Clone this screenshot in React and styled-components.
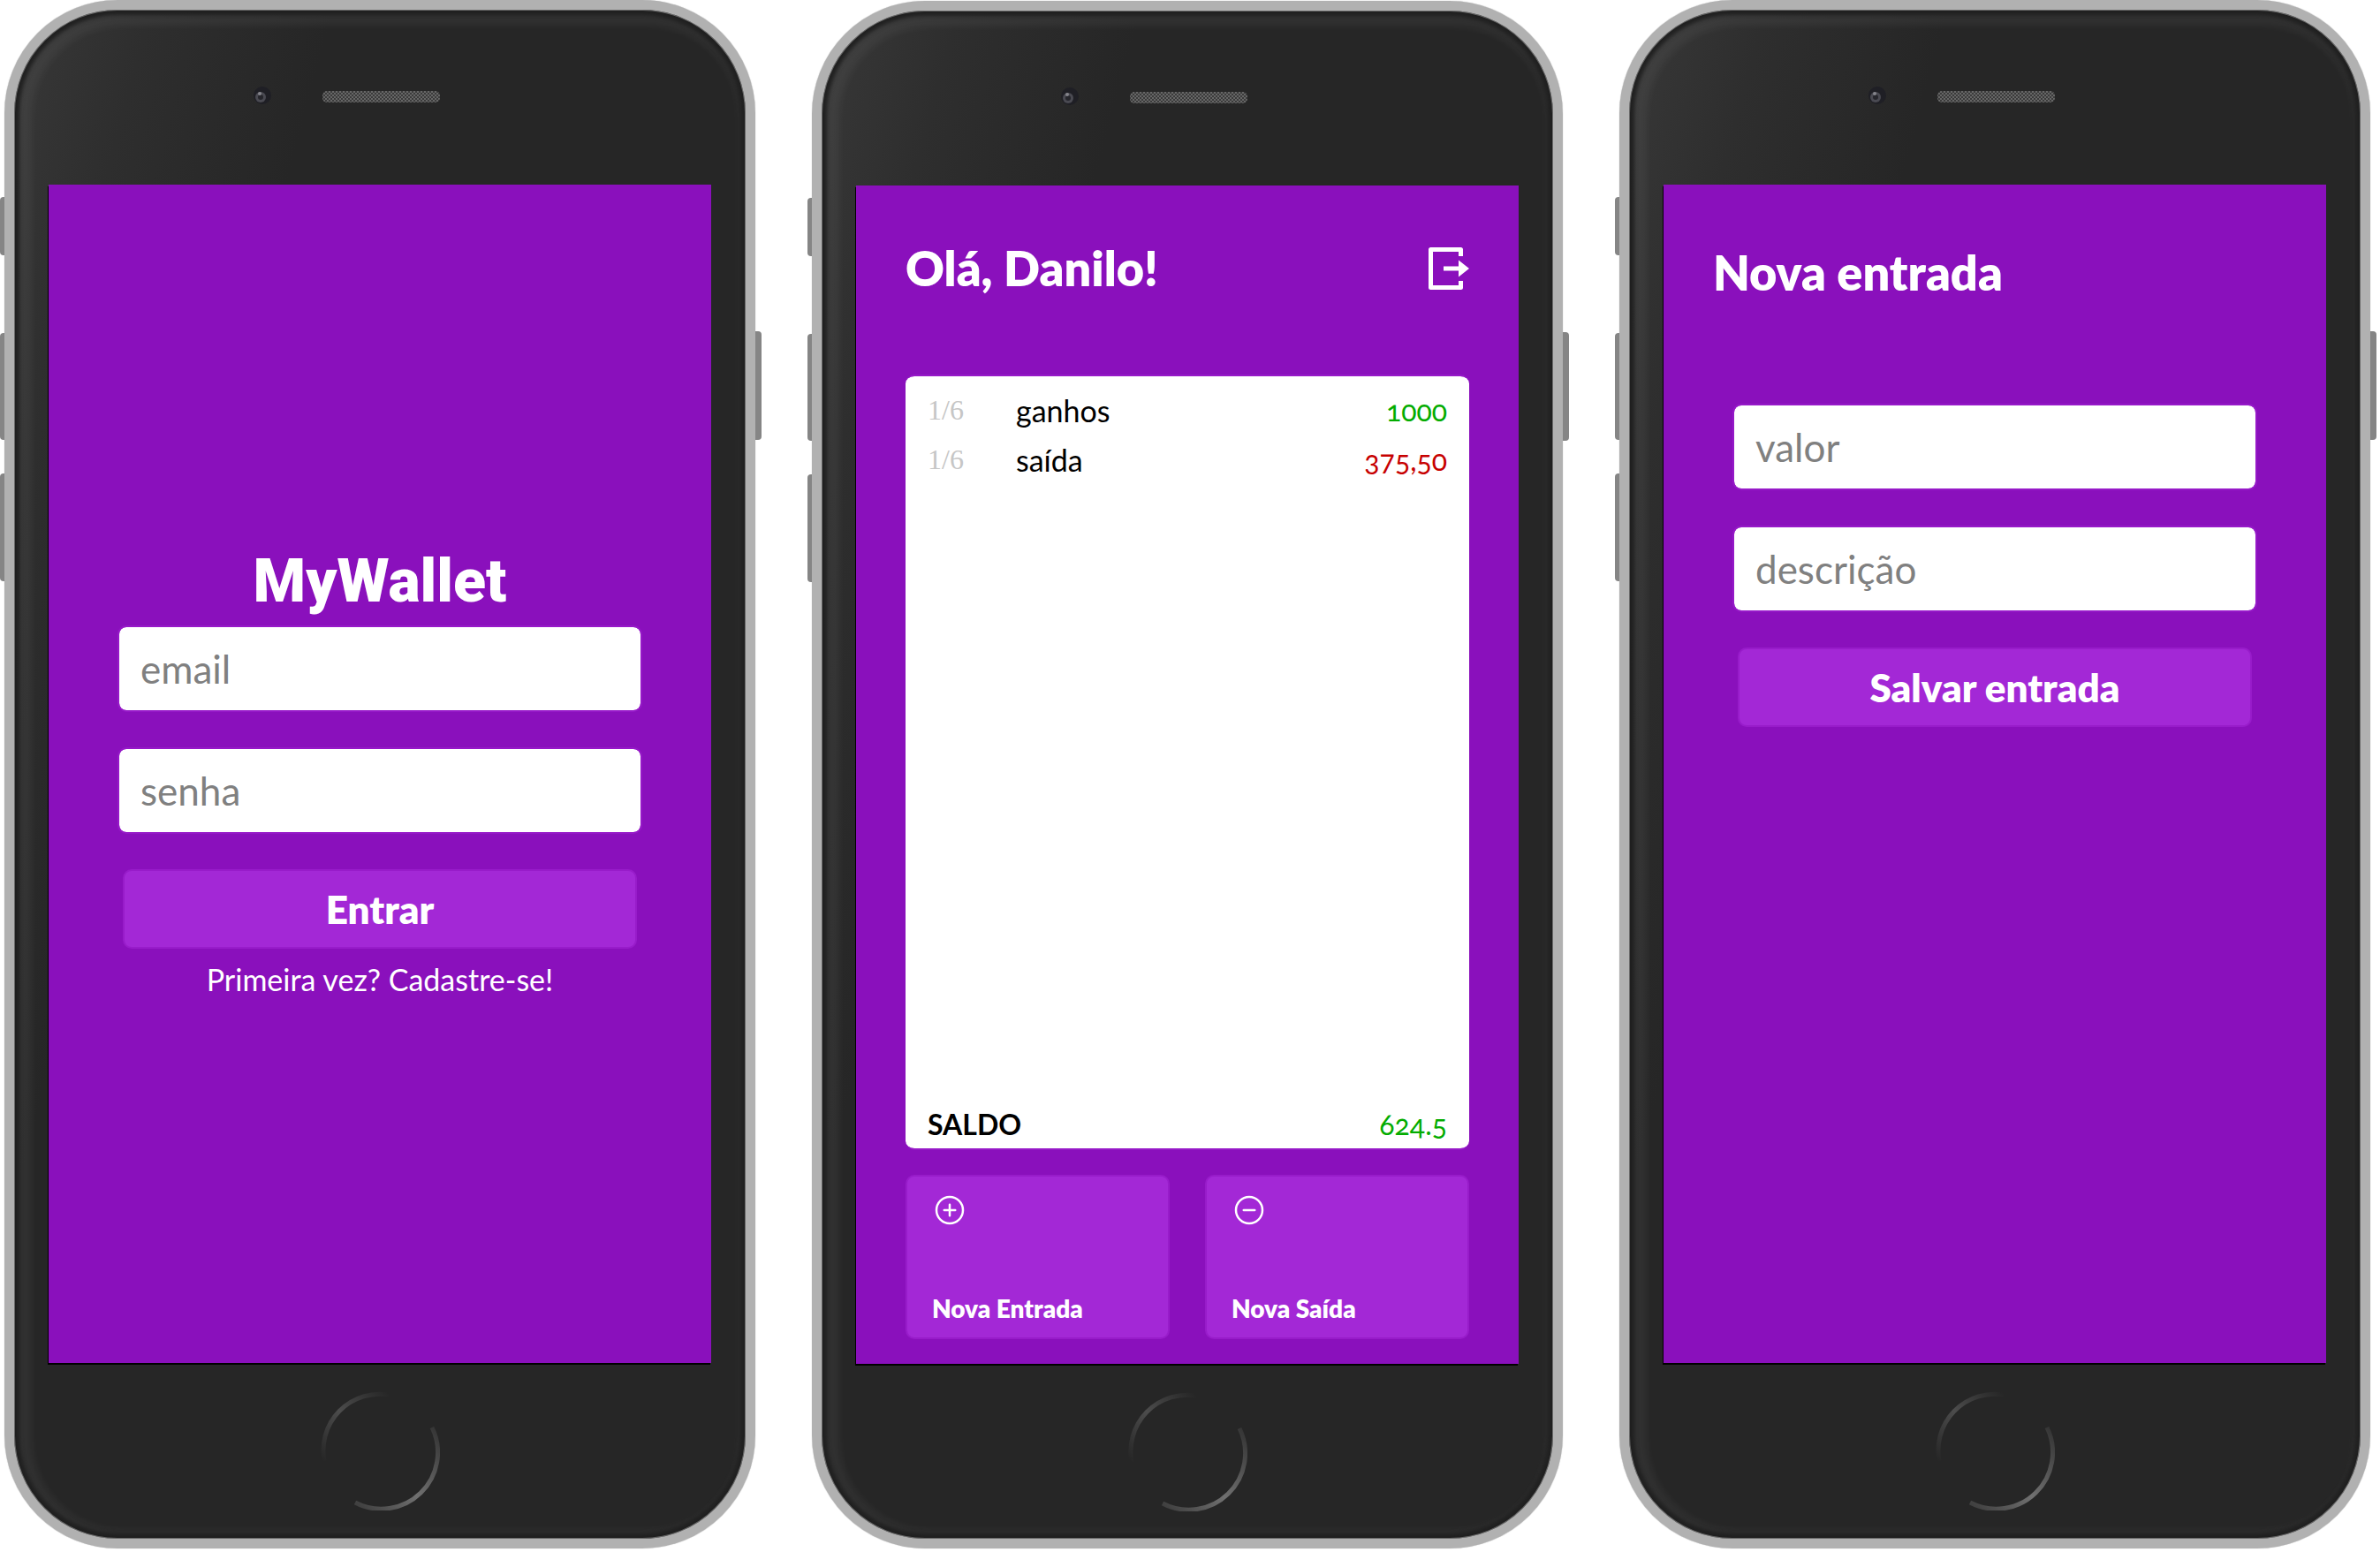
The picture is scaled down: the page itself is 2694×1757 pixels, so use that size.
import React from "react";
import styled, { createGlobalStyle } from "styled-components";
import { IoAddCircleOutline, IoRemoveCircleOutline } from "react-icons/io5";

const GlobalStyle = createGlobalStyle`
  *, *::before, *::after { box-sizing: border-box; }
  body { margin: 0; background: #fff; }
  body, input, button { font-family: Lato, "Open Sans", sans-serif; }
  h1, h2, p, ul, dl, dd { margin: 0; padding: 0; }
`;

const Gallery = styled.main`
  display: flex;
  flex-wrap: wrap;
  justify-content: space-between;
  gap: 50px;
  padding: 0 11px 4px 5px;
`;

const Body = styled.section`
  position: relative;
  display: flex;
  flex-direction: column;
  align-items: center;
  width: 850px;
  margin-top: ${(p) => (p.$lowered ? "1px" : "0")};
  border: 11px solid #b1b1b1;
  border-radius: 128px;
  background: linear-gradient(105deg, #383838 0, #2e2e2e 12%, #262626 28%, #262626 100%);
  box-shadow:
    inset 0 0 0 1px #6a6a6a,
    inset 0 0 4px 6px #202020,
    inset 6px 4px 8px 14px rgba(255, 255, 255, 0.05),
    0 0 1px 0 #a0a0a0;
`;

const SideKey = styled.span`
  position: absolute;
  top: ${(p) => p.$top}px;
  ${(p) => (p.$right ? "right: -18px" : "left: -16px")};
  width: ${(p) => (p.$right ? "7px" : "5px")};
  height: ${(p) => p.$length}px;
  border-radius: ${(p) => (p.$right ? "0 4px 4px 0" : "4px 0 0 4px")};
  background: #858585;
`;

const Forehead = styled.div`
  display: flex;
  align-items: center;
  justify-content: center;
  height: 198px;
  width: 100%;
`;

const Sensors = styled.svg`
  display: block;
`;

const Screen = styled.div`
  display: flex;
  flex-direction: column;
  width: 750px;
  height: 1334px;
  background: #8a10bc;
  color: #fff;
  box-shadow: -1px 2px 0 #000;
`;

const Chin = styled.div`
  display: flex;
  align-items: center;
  justify-content: center;
  height: 198px;
`;

const HomeButton = styled.button`
  display: flex;
  padding: 0;
  border: 0;
  border-radius: 50%;
  background: none;
`;

const Login = styled.div`
  display: flex;
  flex: 1;
  flex-direction: column;
  align-items: center;
  justify-content: center;
  padding: 0 78px 14px;
`;

const Brand = styled.h1`
  font-family: Roboto, sans-serif;
  font-size: 68px;
  font-weight: 900;
  line-height: 100px;
`;

const Form = styled.form`
  display: flex;
  flex-direction: column;
  gap: 40px;
  width: 594px;
`;

const Field = styled.input`
  width: 100%;
  height: 98px;
  padding: 0 24px;
  border: 2px solid #9619c8;
  border-radius: 10px;
  background: #fff;
  background-clip: padding-box;
  font-size: 44px;
  color: #000;
  &::placeholder { color: #808080; opacity: 1; }
`;

const Submit = styled.button`
  height: 90px;
  margin: 0 6px;
  border: 2px solid #981cca;
  border-radius: 10px;
  background: #a328d6;
  color: #fff;
  font-size: 44px;
  font-weight: 800;
`;

const SignUp = styled.a`
  margin-top: 14px;
  font-size: 34px;
  line-height: 42px;
  color: #fff;
  text-decoration: none;
`;

const Page = styled.div`
  display: flex;
  flex: 1;
  flex-direction: column;
  padding: 62px 56px 28px;
`;

const Header = styled.header`
  display: flex;
  align-items: center;
  justify-content: space-between;
  height: ${(p) => (p.$tall ? "76px" : "64px")};
`;

const Title = styled.h2`
  font-size: 54px;
  line-height: 64px;
  font-weight: 800;
`;

const IconButton = styled.button`
  display: flex;
  padding: 0;
  border: 0;
  background: none;
  color: #fff;
`;

const Statement = styled.section`
  display: flex;
  flex: 1;
  flex-direction: column;
  justify-content: space-between;
  margin-top: 88px;
  padding: 10px 25px 6px;
  border: 2px solid #9619c8;
  border-width: 2px 0;
  border-radius: 10px;
  background: #fff;
  background-clip: padding-box;
  color: #000;
  font-size: 32px;
  font-variant-numeric: oldstyle-nums;
`;

const Entries = styled.table`
  width: 100%;
  border-collapse: collapse;
  td { height: 56px; padding: 0; }
`;

const DateCell = styled.td`
  width: 100px;
  color: #c6c6c6;
  font-family: "Liberation Serif", serif;
  font-variant-numeric: normal;
`;

const Description = styled.td`
  font-size: 34px;
`;

const Amount = styled.td`
  text-align: right;
  color: ${(p) => (p.$out ? "#c70000" : "#03ac00")};
`;

const Balance = styled.dl`
  display: flex;
  align-items: center;
  justify-content: space-between;
  height: 44px;
  dt { font-weight: 700; }
  dd { color: #03ac00; }
`;

const Actions = styled.nav`
  display: grid;
  grid-template-columns: 1fr 1fr;
  gap: 40px;
  margin-top: 28px;
`;

const Action = styled.button`
  display: flex;
  flex-direction: column;
  align-items: flex-start;
  justify-content: space-between;
  height: 186px;
  padding: 18px 28px 16px;
  border: 2px solid #981cca;
  border-radius: 10px;
  background: #a328d6;
  color: #fff;
  font-size: 28px;
  font-weight: 800;
`;

const FormArea = styled.div`
  display: flex;
  justify-content: center;
  margin-top: 110px;
`;

const ExitIcon = () => (
  <svg width="46" height="48" viewBox="0 0 46 48" fill="none" aria-hidden="true">
    <path d="M36.500 10V2.500H2.500V45.500H36.500V38" stroke="currentColor" strokeWidth="5" strokeLinejoin="round" />
    <path d="M17 21.500H34V14.500L46 24L34 33.500V26.500H17Z" fill="currentColor" />
  </svg>
);

function Phone({ id, label, lowered, children }) {
  return (
    <Body aria-label={label} $lowered={lowered}>
      <SideKey $top={212} $length={66} />
      <SideKey $top={366} $length={121} />
      <SideKey $top={525} $length={122} />
      <SideKey $right $top={364} $length={123} />
      <Forehead>
        <Sensors width="300" height="30" viewBox="0 0 300 30" aria-hidden="true">
          <defs>
            <pattern id={"mesh-" + id} width="4" height="4" patternUnits="userSpaceOnUse">
              <rect width="4" height="4" fill="#3b3b3b" />
              <rect width="2" height="2" fill="#666" />
              <rect x="2" y="2" width="2" height="2" fill="#666" />
            </pattern>
          </defs>
          <circle cx="17" cy="13" r="10" fill="#1f1f25" />
          <circle cx="15" cy="15" r="6" fill="#4a4a52" />
          <circle cx="15" cy="15" r="3" fill="#26262c" />
          <circle cx="14" cy="11" r="2" fill="#85858c" />
          <rect x="85" y="8" width="133" height="13" rx="5" fill={"url(#mesh-" + id + ")"} />
        </Sensors>
      </Forehead>
      <Screen>{children}</Screen>
      <Chin>
        <HomeButton type="button" aria-label="Home">
          <svg width="136" height="136" viewBox="0 0 136 136" fill="none" aria-hidden="true">
            <defs>
              <linearGradient id={"rim-a-" + id} x1="0" y1="1" x2="1" y2="0">
                <stop offset="0" stopColor="#262626" />
                <stop offset=".5" stopColor="#4c4c4c" />
                <stop offset="1" stopColor="#262626" />
              </linearGradient>
              <linearGradient id={"rim-b-" + id} x1="0" y1="1" x2="1" y2="0">
                <stop offset="0" stopColor="#3c3c3c" />
                <stop offset=".45" stopColor="#707070" />
                <stop offset="1" stopColor="#333" />
              </linearGradient>
            </defs>
            <path d="M5 80A64 64 0 0 1 78 5" stroke={"url(#rim-a-" + id + ")"} strokeWidth="5" />
            <path d="M127 42A64 64 0 0 1 40 127" stroke={"url(#rim-b-" + id + ")"} strokeWidth="5" />
          </svg>
        </HomeButton>
      </Chin>
    </Body>
  );
}

const entries = [
  { date: "1/6", text: "ganhos", amount: "1000" },
  { date: "1/6", text: "saída", amount: "375,50", out: true },
];

export default function App() {
  return (
    <>
      <GlobalStyle />
      <Gallery>
        <Phone id="login" label="Login">
          <Login>
            <Brand>MyWallet</Brand>
            <Form>
              <Field type="email" placeholder="email" aria-label="email" />
              <Field type="password" placeholder="senha" aria-label="senha" />
              <Submit type="button">Entrar</Submit>
            </Form>
            <SignUp href="#cadastro">Primeira vez? Cadastre-se!</SignUp>
          </Login>
        </Phone>
        <Phone id="home" label="Home" lowered>
          <Page>
            <Header>
              <Title>Olá, Danilo!</Title>
              <IconButton type="button" aria-label="Sair"><ExitIcon /></IconButton>
            </Header>
            <Statement>
              <Entries>
                <tbody>
                  {entries.map((e) => (
                    <tr key={e.text}>
                      <DateCell>{e.date}</DateCell>
                      <Description>{e.text}</Description>
                      <Amount $out={e.out}>{e.amount}</Amount>
                    </tr>
                  ))}
                </tbody>
              </Entries>
              <Balance>
                <dt>SALDO</dt>
                <dd>624.5</dd>
              </Balance>
            </Statement>
            <Actions>
              <Action type="button"><IoAddCircleOutline size={40} />Nova Entrada</Action>
              <Action type="button"><IoRemoveCircleOutline size={40} />Nova Saída</Action>
            </Actions>
          </Page>
        </Phone>
        <Phone id="entry" label="Nova entrada">
          <Page>
            <Header $tall><Title>Nova entrada</Title></Header>
            <FormArea>
              <Form>
                <Field placeholder="valor" aria-label="valor" />
                <Field placeholder="descrição" aria-label="descrição" />
                <Submit type="button">Salvar entrada</Submit>
              </Form>
            </FormArea>
          </Page>
        </Phone>
      </Gallery>
    </>
  );
}
